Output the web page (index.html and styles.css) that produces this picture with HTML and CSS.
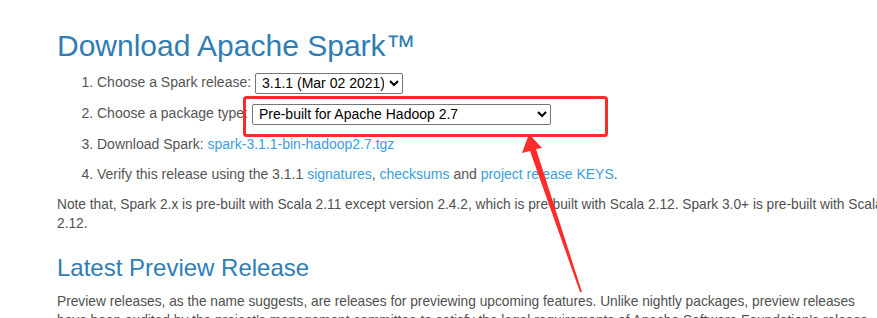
FILE: index.html
```html
<!doctype html>
<html>
  <head>
    <meta charset="UTF-8" />
    <title>Downloads | Apache Spark</title>
    <link rel="stylesheet" href="styles.css">
  </head>
  <body>
    <div class="content">
      <h1>Download Apache Spark™</h1>

      <ol class="steps">
        <li>
          Choose a Spark release:
          <select class="release-select">
            <option>3.1.1 (Mar 02 2021)</option>
          </select>
        </li>
        <li>
          Choose a package type:
          <select class="package-select">
            <option>Pre-built for Apache Hadoop 2.7</option>
          </select>
        </li>
        <li>Download Spark: <a href="#">spark-3.1.1-bin-hadoop2.7.tgz</a></li>
        <li>
          Verify this release using the 3.1.1 <a href="#">signatures</a>,
          <a href="#">checksums</a> and <a href="#">project release KEYS</a>.
        </li>
      </ol>

      <p class="note">
        Note that, Spark 2.x is pre-built with Scala 2.11 except version 2.4.2, which is pre-built with Scala 2.12. Spark 3.0+ is pre-built with Scala 2.12.
      </p>

      <h2>Latest Preview Release</h2>

      <p class="note">
        Preview releases, as the name suggests, are releases for previewing upcoming features. Unlike nightly packages, preview releases have been audited by the project's management committee to satisfy the legal requirements of Apache Software Foundation's release policy.
      </p>
    </div>

    <svg class="markup" width="877" height="318" viewBox="0 0 877 318">
      <rect x="244.5" y="97.5" width="362" height="38" rx="2" fill="none" stroke="#ff2a2a" stroke-width="3" />
      <polygon points="529,134 542,148 536,149 582,292 580,292 530,151 522,153" fill="#ff2a2a" />
    </svg>
  </body>
</html>
```

FILE: styles.css
```css
:root {
  --text: #555555;
  --heading: #2f7db4;
  --link: #3a9ee0;
  --mark: #ff2a2a;
}

* {
  box-sizing: border-box;
}

html,
body {
  margin: 0;
  padding: 0;
  overflow: hidden;
}

body {
  font-family: 'Liberation Sans', Arial, sans-serif;
  font-size: 14px;
  color: var(--text);
  background: #ffffff;
  width: 877px;
  height: 318px;
  position: relative;
}

.content {
  padding-left: 57px;
  width: 877px;
  height: 318px;
  overflow: hidden;
}

a {
  color: var(--link);
  text-decoration: none;
}

h1 {
  font-size: 30px;
  font-weight: 400;
  line-height: 36px;
  color: var(--heading);
  margin: 28px 0 8px;
}

h2 {
  font-size: 24px;
  font-weight: 400;
  line-height: 32px;
  color: var(--heading);
  margin: 20px 0 7px;
}

.steps {
  margin: 0;
  padding-left: 40px;
}

.steps li {
  line-height: 21px;
  margin-bottom: 9px;
}

select {
  font-family: 'Liberation Sans', Arial, sans-serif;
  font-size: 14px;
  color: #000000;
  height: 21px;
  border: 1px solid #767676;
  border-radius: 2px;
  background: #ffffff;
  padding: 0 2px;
  vertical-align: middle;
}

.release-select {
  width: 148px;
}

.package-select {
  width: 299px;
}

/* body copy on the page is set in a tighter, condensed face */
.note {
  font-size: 15px;
  line-height: 19px;
  margin: 0;
  width: 906px;
  transform: scaleX(0.915);
  transform-origin: left top;
  color: #505050;
}

.markup {
  position: absolute;
  top: 0;
  left: 0;
  pointer-events: none;
}
```
